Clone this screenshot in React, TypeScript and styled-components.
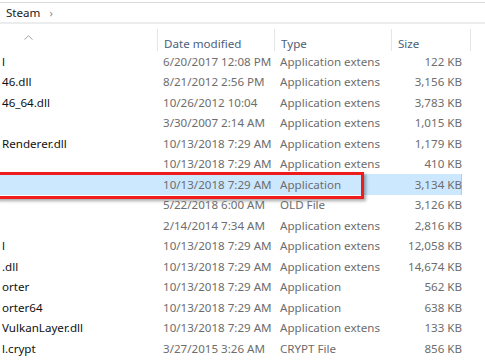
import React from 'react';
import styled, { createGlobalStyle } from 'styled-components';

const GlobalStyle = createGlobalStyle`
  html, body {
    margin: 0;
    padding: 0;
    background: #ffffff;
  }
  body {
    font-family: "Noto Sans", "Open Sans", sans-serif;
  }
`;

type FileRow = {
  name: string;
  date: string;
  type: string;
  size: string;
  selected?: boolean;
};

const files: FileRow[] = [
  { name: 'l', date: '6/20/2017 12:08 PM', type: 'Application extens', size: '122 KB' },
  { name: '46.dll', date: '8/21/2012 2:56 PM', type: 'Application extens', size: '3,156 KB' },
  { name: '46_64.dll', date: '10/26/2012 10:04', type: 'Application extens', size: '3,783 KB' },
  { name: '', date: '3/30/2007 2:14 AM', type: 'Application extens', size: '1,015 KB' },
  { name: 'Renderer.dll', date: '10/13/2018 7:29 AM', type: 'Application extens', size: '1,179 KB' },
  { name: '', date: '10/13/2018 7:29 AM', type: 'Application extens', size: '410 KB' },
  { name: '', date: '10/13/2018 7:29 AM', type: 'Application', size: '3,134 KB', selected: true },
  { name: '', date: '5/22/2018 6:00 AM', type: 'OLD File', size: '3,126 KB' },
  { name: '', date: '2/14/2014 7:34 AM', type: 'Application extens', size: '2,816 KB' },
  { name: 'l', date: '10/13/2018 7:29 AM', type: 'Application extens', size: '12,058 KB' },
  { name: '.dll', date: '10/13/2018 7:29 AM', type: 'Application extens', size: '14,674 KB' },
  { name: 'orter', date: '10/13/2018 7:29 AM', type: 'Application', size: '562 KB' },
  { name: 'orter64', date: '10/13/2018 7:29 AM', type: 'Application', size: '638 KB' },
  { name: 'VulkanLayer.dll', date: '10/13/2018 7:29 AM', type: 'Application extens', size: '133 KB' },
  { name: 'l.crypt', date: '3/27/2015 3:26 AM', type: 'CRYPT File', size: '856 KB' },
];

const COLUMNS = '157px 117px 117px 79px 1fr';

const App = () => {
  return (
    <>
      <GlobalStyle />
      <Window>
        <AddressBar>
          <Crumb>Steam</Crumb>
          <Chevron>›</Chevron>
        </AddressBar>
        <HeaderRow>
          <HeaderCell>
            <SortArrow>
              <svg width="9" height="5" viewBox="0 0 9 5">
                <path d="M0.5 4.5 L4.5 0.8 L8.5 4.5" fill="none" stroke="#a0a0a0" strokeWidth="1" />
              </svg>
            </SortArrow>
          </HeaderCell>
          <HeaderCell $divider>Date modified</HeaderCell>
          <HeaderCell $divider>Type</HeaderCell>
          <HeaderCell $divider>Size</HeaderCell>
          <HeaderCell $divider />
        </HeaderRow>
        <List>
          {files.map((f, i) => (
            <Row key={i} $selected={f.selected}>
              <NameCell>{f.name}</NameCell>
              <Cell>{f.date}</Cell>
              <Cell>{f.type}</Cell>
              <SizeCell>{f.size}</SizeCell>
              {f.selected && <Highlight />}
            </Row>
          ))}
        </List>
      </Window>
    </>
  );
};

const Window = styled.div`
  width: 485px;
  height: 360px;
  overflow: hidden;
  background: #ffffff;
  border-top: 1px solid #d9d9d9;
  margin-top: 2px;
  box-sizing: border-box;
`;

const AddressBar = styled.div`
  display: flex;
  align-items: center;
  height: 19px;
  padding-left: 6px;
  gap: 9px;
  border-bottom: 2px solid #ececec;
`;

const Crumb = styled.span`
  font-size: 11.6px;
  color: #1a1a1a;
`;

const Chevron = styled.span`
  font-size: 11px;
  color: #8a8a8a;
`;

const HeaderRow = styled.div`
  display: grid;
  grid-template-columns: ${COLUMNS};
  height: 27px;
  box-sizing: border-box;
  padding-top: 5px;
`;

const HeaderCell = styled.div<{ $divider?: boolean }>`
  position: relative;
  display: flex;
  align-items: flex-end;
  padding-left: 6px;
  font-size: 11.6px;
  color: #4c607a;
  border-left: ${(p) => (p.$divider ? '1px solid #e5e5e5' : 'none')};
`;

const SortArrow = styled.div`
  position: absolute;
  left: 24px;
  top: -1px;
`;

const List = styled.div`
  display: flex;
  flex-direction: column;
`;

const Row = styled.div<{ $selected?: boolean }>`
  position: relative;
  display: grid;
  grid-template-columns: ${COLUMNS};
  height: 20.5px;
  align-items: center;
  font-size: 11.6px;
  color: #6d6d6d;
  width: 462px;
  box-sizing: border-box;
  background: ${(p) => (p.$selected ? '#cce8ff' : 'transparent')};
  border-right: ${(p) => (p.$selected ? '1px solid #99d1ff' : 'none')};
`;

const Cell = styled.div`
  padding-left: 6px;
  white-space: nowrap;
  overflow: hidden;
`;

const NameCell = styled(Cell)`
  padding-left: 2px;
  color: #111111;
`;

const SizeCell = styled(Cell)`
  text-align: right;
  padding-right: 8px;
`;

const Highlight = styled.div`
  position: absolute;
  left: -4px;
  top: -2px;
  width: 362px;
  height: 21px;
  border: 3px solid #ee1c1c;
  box-shadow: 2px 2px 3px rgba(0, 0, 0, 0.35);
  pointer-events: none;
`;

export default App;
